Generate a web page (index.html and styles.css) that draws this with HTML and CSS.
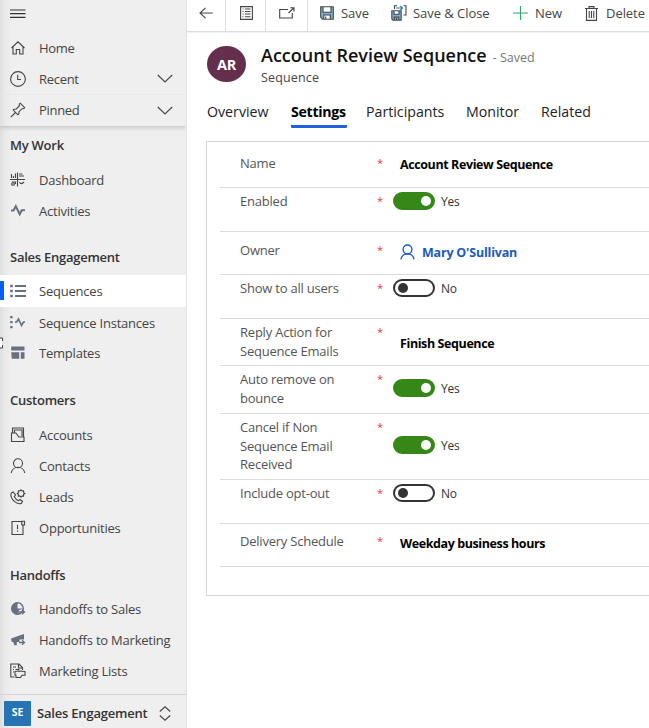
FILE: index.html
```html
<!DOCTYPE html>
<html lang="en">
<head>
<meta charset="utf-8">
<title>Account Review Sequence</title>
<link rel="stylesheet" href="styles.css">
</head>
<body>
<div class="app">
  <nav class="sidebar">
    <div class="menu-row"><svg width="16" height="10" viewBox="0 0 16 10"><path d="M0 1h15.500M0 4.700h15.500M0 8.300h15.500" stroke="#333" stroke-width="1.200"/></svg></div>
    <div class="nav-top">
      <a class="item"><svg class="ico" viewBox="0 0 16 16"><path d="M1.500 8 8 1.800 14.500 8M3 6.800V14h3.300V9.500h3.400V14H13V6.800"/></svg><span>Home</span></a>
      <a class="item"><svg class="ico" viewBox="0 0 16 16"><circle cx="8" cy="8" r="7.400"/><path d="M7.700 3.800V8.500H11"/></svg><span>Recent</span><svg class="chev" viewBox="0 0 16 9"><path d="M.8 1 8 8 15.200 1"/></svg></a>
      <a class="item divided"><svg class="ico" viewBox="0 0 16 16"><path d="M10.200 1.200 14.700 5.700 13.500 6.700H12L9 9.700 8.800 12 7.900 12.800 3.200 8.100 4 7.200 6.300 7 9.300 4V2.200ZM5.500 10.500.800 15.200"/></svg><span>Pinned</span><svg class="chev" viewBox="0 0 16 9"><path d="M.8 1 8 8 15.200 1"/></svg></a>
    </div>
    <section class="group first">
      <h3>My Work</h3>
      <a class="item"><svg class="ico" viewBox="0 0 16 16"><path d="M0 7.500h15M7.500.5v14M1.500 2v4M3.500 4v2M5.500 1.500V6M9 2h3.500M9 4h5M2 10h3.500v2M9.500 10.200q1.500 3 4.500-.2"/><circle cx="3" cy="12" r="1.300"/></svg><span>Dashboard</span></a>
      <a class="item"><svg class="ico slate" viewBox="0 0 16 16"><path d="M1 7.500h2.500L5.800 3.200l3.900 8 2-4H15" stroke-width="2"/></svg><span>Activities</span></a>
    </section>
    <section class="group sales">
      <h3>Sales Engagement</h3>
      <a class="item active"><svg class="ico slate" viewBox="0 0 16 16"><path d="M5 3h11M5 8h11M5 13h11" stroke-width="1.900"/><path class="fill" d="M.2 1.800h2.600v2.400H.2zM.2 6.800h2.600v2.400H.2zM.2 11.800h2.600v2.400H.2z"/></svg><span>Sequences</span></a>
      <a class="item"><svg class="ico slate" viewBox="0 0 16 16"><path d="M5 7h1.700l1.800-3 3 6.500 2-3.500H15" stroke-width="1.700"/><path class="fill" d="M.2.9h2.400v2.400H.2zM.2 5.900h2.400v2.400H.2zM.2 10.900h2.400v2.400H.2z"/></svg><span>Sequence Instances</span></a>
      <a class="item"><svg class="ico slate" viewBox="0 0 16 16"><path class="fill" d="M1.800 1.500H14.500v4H1.200V2zM1.200 7.300h8v6.400H1.800zM10.800 7.300h3.700v6.400h-3.700z"/></svg><span>Templates</span></a>
    </section>
    <section class="group">
      <h3>Customers</h3>
      <a class="item"><svg class="ico" viewBox="0 0 16 16"><path d="M2.500 6.500V1h11v8.500M4.500 5.500V3H12v6M1.500 6h4.300l3.200 4h5v4.500h-12.500z"/></svg><span>Accounts</span></a>
      <a class="item"><svg class="ico" viewBox="0 0 16 16"><circle cx="8" cy="5.300" r="4.500"/><path d="M1.200 15a6.900 6.900 0 0 1 13.600 0"/></svg><span>Contacts</span></a>
      <a class="item"><svg class="ico" viewBox="0 0 16 16"><path d="M1.500 3.800 3.200 3l2.300 3-1.300 1.600q1.600 3.200 4.300 4.100l1.500-1.200 2.500 2-1 1.800q-1.700 1-4.500-.2Q1.800 11 .9 6.800q-.3-2 .6-3Z"/><circle cx="11" cy="4.500" r="3"/><path d="M11 .2v1.300M11 7.500v1.300M6.700 4.500H8M14 4.500h1.500M8 1.500l.9.900M13.100 6.600l.9.900M14 1.500l-.9.900M8.900 6.600 8 7.500"/></svg><span>Leads</span></a>
      <a class="item"><svg class="ico" viewBox="0 0 16 16"><path d="M11.800 1.500H2v13h11V4.500M11.800 1.200h2.700V5h-2.700zM7.500 4.800v4.500M7.500 10.400v1.300"/></svg><span>Opportunities</span></a>
    </section>
    <section class="group handoffs">
      <h3>Handoffs</h3>
      <a class="item"><svg class="ico slate" viewBox="0 0 16 16"><circle cx="7.500" cy="7.500" r="5.800" stroke-width="1.400"/><path class="fill" d="M7.500 1.500A6 6 0 0 0 1.500 7.500 6 6 0 0 0 8.500 13.400L9 9l5-1.500H7.500z"/><path d="M9 11h5.500M12 8.800l2.500 2.200L12 13.200" stroke-width="1.300"/></svg><span>Handoffs to Sales</span></a>
      <a class="item"><svg class="ico slate" viewBox="0 0 16 16"><path class="fill" d="M14 2v5.500H9.500V10H6.800v3.200H4.200L3.300 10H1.800L1 6.500z"/><path d="M9 10.500h5.500M12 8.300l2.500 2.200L12 12.700" stroke-width="1.300"/></svg><span>Handoffs to Marketing</span></a>
      <a class="item"><svg class="ico" viewBox="0 0 16 16"><path d="M4.500 14H.8V1H9l3.500 3.500V7M8.500 1v4h4M3 4h3M3 6.500h1M5.500 6.500h4M3 9h1M5 8.500 9 8l6 .5v3.700H12L10.500 14.500H6V12.200H5z"/></svg><span>Marketing Lists</span></a>
    </section>
    <div class="area"><span class="badge">SE</span><span class="area-name">Sales Engagement</span><svg width="12" height="15" viewBox="0 0 12 15"><path d="M.8 5.500 6 .800 11.200 5.500M.8 9.500 6 14.200 11.200 9.500" fill="none" stroke="#444" stroke-width="1.100"/></svg></div>
    <svg class="handle" viewBox="0 0 4 12"><path d="M0 1h2.500v3M0 11h2.500V8" fill="none" stroke="#444"/><path d="M0 2h2v8H0z" fill="#fff"/></svg>
  </nav>

  <main class="main">
    <div class="commands">
      <button class="cmd back"><svg width="14" height="12" viewBox="0 0 14 12"><path d="M6.500.8 1 6l5.500 5.200M1 6h12.700"/></svg></button>
      <button class="cmd form"><svg width="13" height="14" viewBox="0 0 13 14"><path d="M.6.600h11.800v12.800H.6zM2.500 3h1M5 3h5.500M2.500 5.500h1M5 5.500h5.500M2.500 8h1M5 8h5.500M2.500 10.800h1M5 10.800h5.500"/></svg></button>
      <button class="cmd popout"><svg width="16" height="12" viewBox="0 0 16 12"><path d="M9 2.500H.7v8.500h12.600V6M9.500 6 14.700 1M11.300.7H15v3.700"/></svg></button>
      <button class="cmd save"><svg width="14" height="14" viewBox="0 0 14 14"><path fill="#76b2dc" d="M1 1h12v12H1z"/><path fill="#fff" d="M3 1h8v5H3zM4 9h6v4H4z"/><path d="M.7.7h12.600v12.600H2.700l-2-2zM3 .7V6.200h8V.7M3.800 13V9h6.500v4M5.800 10.500V13"/></svg><span>Save</span></button>
      <button class="cmd close"><svg width="16" height="16" viewBox="0 0 16 16"><path fill="#76b2dc" d="M1 6h9v9H1z"/><path fill="#fff" d="M3 6h5v3H3z"/><path d="M.8 5.700h9.400v9.500H2L.8 14zM3 5.700v3.500h5V5.700M3.200 15v-3h4.600v3M5.500 13v2M3.500 4V.700H6M12.500.7H15V10h-2.500"/><path class="blue" d="M5 3h6.500M9.300.8 11.500 3 9.300 5.200"/></svg><span>Save &amp; Close</span></button>
      <button class="cmd new"><svg width="15" height="14" viewBox="0 0 15 14"><path class="green" d="M7.500 0v14M0 7h15"/></svg><span>New</span></button>
      <button class="cmd delete"><svg width="13" height="15" viewBox="0 0 13 15"><path d="M0 2.500h13M4 2.300V.6h5v1.700M1.500 2.500v11.900h10V2.500M4.200 5v7M6.500 5v7M8.800 5v7"/></svg><span>Delete</span></button>
    </div>

    <header class="record">
      <div class="avatar">AR</div>
      <div>
        <div class="title-line"><h1>Account Review Sequence</h1><span class="saved">- Saved</span></div>
        <div class="entity">Sequence</div>
      </div>
    </header>

    <div class="tabs">
      <a class="tab overview">Overview</a>
      <a class="tab selected">Settings</a>
      <a class="tab participants">Participants</a>
      <a class="tab monitor">Monitor</a>
      <a class="tab related">Related</a>
    </div>

    <div class="card">
      <div class="row name"><label>Name</label><i>*</i><div class="value"><b>Account Review Sequence</b></div></div>
      <div class="row enabled"><label>Enabled</label><i>*</i><div class="value"><span class="toggle on"></span><span class="state">Yes</span></div></div>
      <div class="row owner"><label>Owner</label><i>*</i><div class="value"><svg class="person" viewBox="0 0 16 16"><circle cx="8" cy="5.300" r="4.700"/><path d="M1 15.800a7.100 7.100 0 0 1 14 0"/></svg><b class="link">Mary O'Sullivan</b></div></div>
      <div class="row show"><label>Show to all users</label><i>*</i><div class="value"><span class="toggle"></span><span class="state">No</span></div></div>
      <div class="row reply"><label>Reply Action for<br>Sequence Emails</label><i>*</i><div class="value"><b>Finish Sequence</b></div></div>
      <div class="row auto"><label>Auto remove on<br>bounce</label><i>*</i><div class="value"><span class="toggle on"></span><span class="state">Yes</span></div></div>
      <div class="row cancel"><label>Cancel if Non<br>Sequence Email<br>Received</label><i>*</i><div class="value"><span class="toggle on"></span><span class="state">Yes</span></div></div>
      <div class="row optout"><label>Include opt-out</label><i>*</i><div class="value"><span class="toggle"></span><span class="state">No</span></div></div>
      <div class="row delivery"><label>Delivery Schedule</label><i>*</i><div class="value"><b>Weekday business hours</b></div></div>
    </div>
  </main>
</div>
</body>
</html>
```
FILE: styles.css
```css
* { box-sizing: border-box; }
body { margin: 0; background: #fff; font-family: "Open Sans", "Noto Sans", sans-serif; color: #444; overflow: hidden; }
h1, h3 { margin: 0; }
svg { flex: none; display: block; }
.app { display: flex; width: 649px; height: 728px; overflow: hidden; white-space: nowrap; }

.sidebar { position: relative; width: 187px; flex: none; display: flex; flex-direction: column; border-right: 1px solid #e3e3e3; background: linear-gradient(90deg, #dedede 0, #e9e9e9 5px, #efefef 12px); }
.menu-row { height: 32px; padding: 9px 0 0 10px; }
.nav-top { padding-bottom: 1px; box-shadow: 0 2px 4px rgba(0, 0, 0, .16); clip-path: inset(0 0 -6px 0); }
.item { display: flex; align-items: center; height: 31px; padding-left: 10px; font-size: 13px; letter-spacing: -.22px; color: #444; }
.item span { width: 119px; }
.nav-top .item { letter-spacing: -.3px; }
.item.divided { border-top: 1px solid #e8e8e8; }
.ico { width: 16px; height: 16px; margin-right: 13px; fill: none; stroke: #444; stroke-width: 1.1; }
.ico.slate { stroke: #667080; }
.ico .fill { fill: #667080; stroke: none; }
.chev { width: 16px; height: 9px; margin-left: -1px; fill: none; stroke: #444; stroke-width: 1.1; }
.group { padding-top: 12px; }
.group.first { padding-top: 0; }
.group.sales { padding-bottom: 1px; }
.group h3 { height: 38px; line-height: 38px; padding-left: 10px; font-size: 13px; font-weight: 600; letter-spacing: -.25px; color: #333; }
.group.sales h3 { height: 37px; }
.group.handoffs { padding-top: 13px; }
.group.handoffs h3 { height: 37px; }
.item.active { height: 32px; background: linear-gradient(#005fff, #005fff) 0 6px / 4px 19px no-repeat, #fff; }
.group.sales .item + .item:last-child { height: 30px; }
.area { margin-top: auto; height: 34px; border-top: 1px solid #d4d4d4; padding: 3px 0 0 4px; display: flex; align-items: center; }
.badge { width: 27px; height: 25px; background: #2774b5; color: #fff; font-size: 10.5px; font-weight: 700; line-height: 23px; text-align: center; border-radius: 1px; }
.area-name { width: 122px; margin-left: 6px; font-size: 13px; font-weight: 600; letter-spacing: -.2px; color: #333; }
.handle { position: absolute; left: 0; top: 337px; width: 4px; height: 12px; }

.main { flex: 1; min-width: 0; }
.commands { display: flex; height: 32px; border-bottom: 1px solid #ddd; box-shadow: 0 1px 1px #f3f3f3; }
.cmd { display: flex; align-items: center; flex: none; border: 0; padding: 0 0 5px; background: none; font: 13px "Open Sans", sans-serif; letter-spacing: -.05px; color: #444; }
.cmd svg { fill: none; stroke: #444; stroke-width: 1.1; }
.cmd svg [fill] { stroke: none; }
.cmd .green { stroke: #2fa866; }
.cmd .blue { stroke: #2478c2; }
.back { width: 39px; padding-left: 12px; border-right: 1px solid #ddd; }
.form { width: 40px; padding-left: 14px; border-right: 1px solid #ddd; }
.popout { width: 42px; padding-left: 13px; border-right: 1px solid #ddd; }
.save { width: 83px; padding-left: 12px; gap: 7px; }
.close { width: 122px; gap: 6px; }
.new { width: 72px; gap: 7px; }
.delete { gap: 8px; }

.record { display: flex; padding: 14px 0 0 20px; height: 68px; }
.avatar { width: 39px; height: 36px; border-radius: 50%; background: #632f4d; color: #fff; font-weight: 700; font-size: 14.5px; letter-spacing: -.3px; line-height: 37px; text-align: center; margin-right: 15px; }
.title-line { display: flex; align-items: baseline; gap: 6px; height: 23px; line-height: 19px; }
h1 { font-size: 18px; font-weight: 600; color: #111; }
.saved { font-size: 12.5px; color: #777; }
.entity { font-size: 12.5px; font-weight: 500; letter-spacing: .15px; line-height: 17px; color: #444; }

.tabs { display: flex; height: 41px; padding-left: 20px; }
.tab { height: 28px; line-height: 24px; font-size: 14.200px; color: #222; flex: none; }
.overview { width: 84px; }
.selected { width: 56px; margin-right: 19px; border-bottom: 3px solid #2360df; font-weight: 700; letter-spacing: -.3px; color: #000; border-radius: 1px; }
.participants { width: 100px; }
.monitor { width: 75px; }

.card { margin-left: 19px; width: 460px; height: 455px; border: 1px solid #d5d5d5; padding-left: 13px; }
.row { display: grid; grid-template-columns: 157px 16px 1fr; border-bottom: 1px solid #dcdcdc; }
.row label { padding-left: 20px; font-size: 13px; letter-spacing: -.22px; line-height: 18.5px; color: #555; }
.row i { font-style: normal; font-size: 11px; line-height: 18px; color: #ee3a3a; }
.value { display: flex; align-items: center; height: 18px; color: #333; }
.value b { font-size: 12.5px; font-weight: 700; letter-spacing: -.4px; color: #000; margin-left: 7px; }
.toggle { width: 42px; height: 18px; border: 2px solid #333; border-radius: 9px; display: flex; align-items: center; padding: 0 3px; margin-right: 6px; }
.toggle::before { content: ""; width: 10px; height: 10px; border-radius: 50%; background: #333; }
.toggle.on { background: #358717; border-color: #358717; justify-content: flex-end; padding-right: 2px; }
.toggle.on::before { background: #fff; }
.state { font-size: 12px; letter-spacing: -.2px; }
.person { width: 15px; height: 16px; margin-left: 7px; fill: none; stroke: #1c5bb8; stroke-width: 1.5; }
.value .link { color: #1c5bb8; margin-left: 7px; letter-spacing: -.2px; }
.name { height: 46px; padding-top: 12px; }
.name .value { padding-top: 3px; }
.enabled { height: 44px; padding-top: 4px; }
.owner { height: 43px; padding-top: 9px; }
.owner .value { padding-top: 4px; }
.show { height: 44px; padding-top: 4px; }
.reply { height: 47px; padding-top: 4px; }
.reply .value { margin-top: 11px; }
.auto { height: 48px; padding-top: 4px; }
.auto .value { margin-top: 9px; }
.cancel { height: 66px; padding-top: 4px; }
.cancel .value { margin-top: 18px; }
.optout { height: 44px; padding-top: 4px; }
.delivery { height: 43px; padding-top: 8px; }
.delivery .value { margin-top: 2px; }
```
